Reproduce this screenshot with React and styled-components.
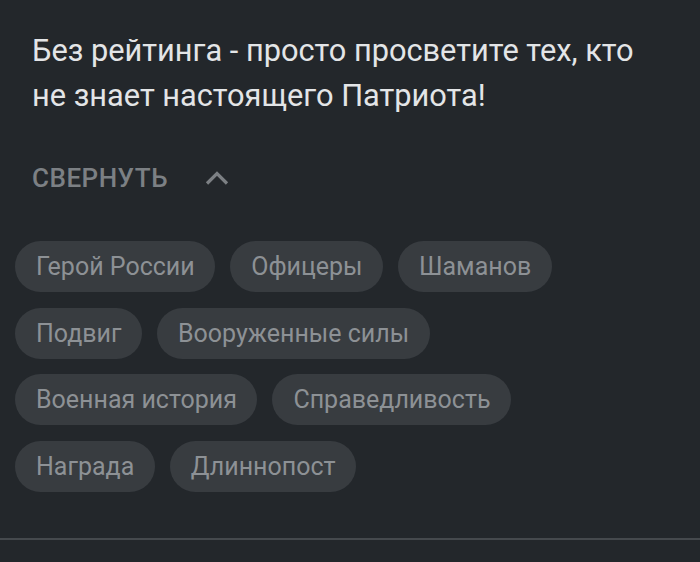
import React from "react";
import styled, { createGlobalStyle } from "styled-components";

const Global = createGlobalStyle`
  html, body {
    margin: 0;
    padding: 0;
    background: #23272b;
  }
  body {
    font-family: Roboto, "Noto Sans", "Liberation Sans", sans-serif;
  }
`;

const Page = styled.div`
  width: 700px;
  height: 562px;
  background: #23272b;
  padding-top: 28px;
  box-sizing: border-box;
  overflow: hidden;
`;

const Body = styled.div`
  padding: 0 15px;
`;

const Text = styled.p`
  margin: 0;
  padding-left: 17px;
  font-size: 30.75px;
  line-height: 45px;
  color: #e3e5e7;
  font-weight: 400;
`;

const Toggle = styled.button`
  display: flex;
  align-items: center;
  gap: 37px;
  margin: 45px 0 0 17px;
  padding: 0;
  border: 0;
  background: none;
  font-family: inherit;
  font-size: 26px;
  line-height: 30px;
  font-weight: 500;
  color: #7c8084;
  letter-spacing: 0.5px;
  cursor: pointer;
`;

const Tags = styled.div`
  display: flex;
  flex-direction: column;
  gap: 15.5px;
  margin-top: 48px;
`;

const TagRow = styled.div`
  display: flex;
  gap: 15px;
`;

const Tag = styled.span`
  display: inline-flex;
  align-items: center;
  height: 51px;
  padding: 0 20.5px 0 21px;
  border-radius: 26px;
  background: #383c40;
  color: #8d9195;
  font-size: 25px;
  white-space: nowrap;
  box-sizing: border-box;
`;

const Divider = styled.hr`
  margin: 46px 0 0;
  border: 0;
  height: 2px;
  background: #45494d;
`;

const ChevronUp = () => (
  <svg width="24" height="14" viewBox="0 0 24 14" fill="none">
    <path d="M2 12.5 L12 2.5 L22 12.5" stroke="#7c8084" strokeWidth="3.2" />
  </svg>
);

const rows = [
  ["Герой России", "Офицеры", "Шаманов"],
  ["Подвиг", "Вооруженные силы"],
  ["Военная история", "Справедливость"],
  ["Награда", "Длиннопост"],
];

export default function App() {
  return (
    <Page>
      <Global />
      <Body>
        <Text>
          Без рейтинга - просто просветите тех, кто
          <br />
          не знает настоящего Патриота!
        </Text>
        <Toggle>
          СВЕРНУТЬ
          <ChevronUp />
        </Toggle>
        <Tags>
          {rows.map((r, i) => (
            <TagRow key={i}>
              {r.map((t) => (
                <Tag key={t}>{t}</Tag>
              ))}
            </TagRow>
          ))}
        </Tags>
      </Body>
      <Divider />
    </Page>
  );
}
